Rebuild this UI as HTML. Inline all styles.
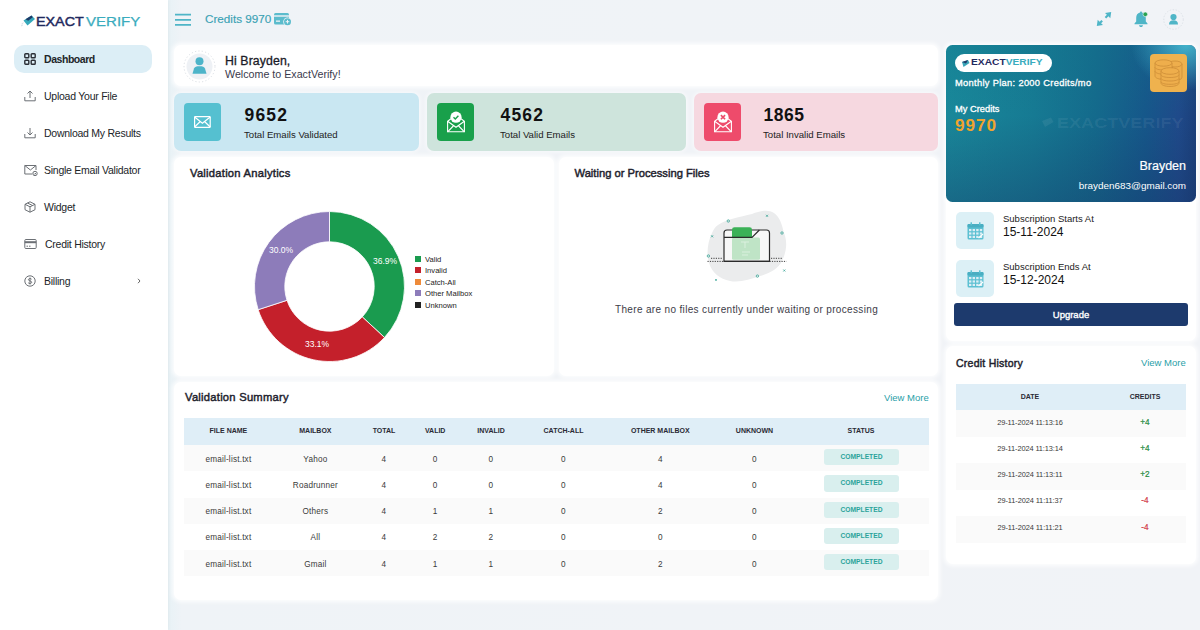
<!DOCTYPE html>
<html><head><meta charset="utf-8">
<style>
*{margin:0;padding:0;box-sizing:border-box}
html,body{width:1200px;height:630px;overflow:hidden}
body{background:linear-gradient(90deg,#fff 0,#fff 168px,#e8f2f6 168px,#eff3f7 182px,#f1f3f7 100%);font-family:"Liberation Sans",sans-serif;color:#1e1e2d;position:relative}
.abs{position:absolute}
.t{position:absolute;white-space:nowrap;line-height:1}
#side{left:0;top:0;width:168px;height:630px;background:#fff;box-shadow:1px 0 3px rgba(0,0,0,0.04)}
.nav{position:absolute;left:14px;width:137.5px;height:27.5px;border-radius:10px;font-size:10.5px;color:#212529}
.nav svg{position:absolute;left:10px;top:8px}
.nav .tx{position:absolute;left:30px;top:9px;white-space:nowrap;line-height:1;letter-spacing:-0.25px}
.nav.act{background:#dceef6}
.nav.act .tx{font-weight:bold;letter-spacing:-0.45px}
.card{position:absolute;background:#fff;border-radius:7px;box-shadow:0 0 4px 1.5px rgba(255,255,255,0.85)}
.stat{position:absolute;border-radius:7px;box-shadow:0 0 4px 1px rgba(255,255,255,0.6)}
.stat .ib{position:absolute;left:10px;top:10px;width:37px;height:37.5px;border-radius:4px}
.stat .ib svg{position:absolute;left:8px;top:8px}
.stat .num{position:absolute;top:106px;font-size:17.5px;font-weight:bold;color:#111;line-height:1;letter-spacing:0.6px}
.stat .lb{position:absolute;font-size:9.6px;color:#222;line-height:1;white-space:nowrap}
.ttl{position:absolute;font-size:11.2px;-webkit-text-stroke:0.45px #1e1e2d;letter-spacing:0.25px;color:#1e1e2d;white-space:nowrap;line-height:1}
.th{position:absolute;font-size:7px;font-weight:bold;color:#2a2a35;line-height:1;white-space:nowrap;transform:translateX(-50%)}
.td{position:absolute;font-size:8.2px;color:#3a3a3a;letter-spacing:0.2px;line-height:1;white-space:nowrap;transform:translateX(-50%)}
.badge{position:absolute;left:824px;width:75px;height:16.2px;background:#d9efee;border-radius:3px;color:#2aa39a;font-size:6.7px;font-weight:bold;text-align:center;line-height:16.2px}
.lg{position:absolute;left:415px;width:6.2px;height:6px;margin-top:0.6px}
.lgt{position:absolute;left:425px;font-size:7.6px;color:#222;line-height:1;white-space:nowrap;margin-top:0.8px}
</style></head>
<body>
<div id="side" class="abs">
  <!-- logo -->
  <svg class="abs" style="left:21px;top:14px" width="16" height="13" viewBox="0 0 16 13">
    <path d="M2.5 6.5 L10.5 1.5 L14 5 L6.5 11.5 Z" fill="#36a9bb"/>
    <path d="M4.5 5.2 L10.5 1.5 L11.8 3.3 L7.2 6.8 Z" fill="#1f3a68"/>
    <path d="M0.5 10 L2.5 8.8 M0 12 L2 10.8" stroke="#c5d3dc" stroke-width="0.7"/>
  </svg>
  <div class="t" style="left:36px;top:14.5px;font-size:13.2px;color:#1f2a5e;-webkit-text-stroke:0.45px #1f2a5e;transform:scaleX(1.085);transform-origin:0 0">EXACT</div>
  <div class="t" style="left:85.5px;top:14.5px;font-size:13.2px;color:#3aacbe;-webkit-text-stroke:0.25px #3aacbe;transform:scaleX(1.14);transform-origin:0 0">VERIFY</div>

  <div class="nav act" style="top:45px">
    <svg width="12" height="12" viewBox="0 0 12 12" fill="none" stroke="#2b2f36" stroke-width="1.4"><rect x="0.8" y="0.8" width="4" height="4" rx="0.8"/><rect x="7.2" y="0.8" width="4" height="4" rx="0.8"/><rect x="0.8" y="7.2" width="4" height="4" rx="0.8"/><rect x="7.2" y="7.2" width="4" height="4" rx="0.8"/></svg>
    <div class="tx">Dashboard</div></div>
  <div class="nav" style="top:82px">
    <svg width="12" height="12" viewBox="0 0 12 12" fill="none" stroke="#6c7075" stroke-width="1"><path d="M0.8 7 V10.8 H11.2 V7"/><path d="M6 8 V1.2 M3.5 3.5 L6 1 L8.5 3.5"/></svg>
    <div class="tx">Upload Your File</div></div>
  <div class="nav" style="top:119px">
    <svg width="12" height="12" viewBox="0 0 12 12" fill="none" stroke="#6c7075" stroke-width="1"><path d="M0.8 7 V10.8 H11.2 V7"/><path d="M6 1 V8 M3.5 5.5 L6 8 L8.5 5.5"/></svg>
    <div class="tx">Download My Results</div></div>
  <div class="nav" style="top:156px">
    <svg width="14" height="12" viewBox="0 0 14 12" fill="none" stroke="#6c7075" stroke-width="1"><path d="M8 10 H0.8 V1.5 H12 V6"/><path d="M0.8 1.5 L6.4 6 L12 1.5"/><circle cx="11" cy="9.5" r="2.2"/><path d="M10 9.5 L10.8 10.3 L12 9"/></svg>
    <div class="tx">Single Email Validator</div></div>
  <div class="nav" style="top:193px">
    <svg width="12" height="12" viewBox="0 0 12 12" fill="none" stroke="#6c7075" stroke-width="1"><path d="M6 0.8 L11 3.3 V8.7 L6 11.2 L1 8.7 V3.3 Z"/><path d="M1 3.3 L6 5.8 L11 3.3 M6 5.8 V11.2 M3.5 2 L8.5 4.5"/></svg>
    <div class="tx">Widget</div></div>
  <div class="nav" style="top:230px">
    <svg width="13" height="12" viewBox="0 0 13 12" fill="none" stroke="#6c7075" stroke-width="1"><rect x="0.8" y="1.5" width="11.4" height="9" rx="1"/><path d="M0.8 4.2 H12.2" stroke-width="2"/><path d="M2.5 8.2 H4 M5 8.2 H6.5"/></svg>
    <div class="tx" style="left:31px">Credit History</div></div>
  <div class="nav" style="top:267px">
    <svg width="12" height="12" viewBox="0 0 12 12" fill="none" stroke="#6c7075" stroke-width="1"><circle cx="6" cy="6" r="5.2"/><path d="M7.6 4.2 C7.2 3.4 4.4 3.2 4.4 4.7 C4.4 6.2 7.7 5.6 7.7 7.3 C7.7 8.8 4.8 8.7 4.2 7.8 M6 2.5 V9.5"/></svg>
    <div class="tx">Billing</div>
    <svg style="left:123px;top:11px" width="4" height="6" viewBox="0 0 4 6" fill="none" stroke="#555" stroke-width="0.9"><path d="M1 0.8 L3 3 L1 5.2"/></svg>
  </div>
</div>

<!-- topbar -->
<svg class="abs" style="left:175px;top:13px" width="16" height="13" viewBox="0 0 16 13" stroke="#4fb5c7" stroke-width="1.7"><path d="M0 1.7 H16 M0 6.8 H16 M0 11.9 H16"/></svg>
<div class="t" style="left:205px;top:12.6px;font-size:11.7px;color:#3aa2b4;-webkit-text-stroke:0.15px #3aa2b4">Credits 9970</div>
<svg class="abs" style="left:274px;top:13px" width="18" height="13" viewBox="0 0 18 13">
  <rect x="0" y="0" width="15" height="11.5" rx="1.5" fill="#5bbccd"/>
  <rect x="0" y="2.3" width="15" height="1.4" fill="#f1f3f7"/>
  <rect x="2" y="7.5" width="4" height="1.3" fill="#f1f3f7"/>
  <circle cx="13.5" cy="8.7" r="4.3" fill="#f1f3f7"/>
  <circle cx="13.5" cy="8.7" r="3.5" fill="#5bbccd"/>
  <path d="M13.5 6.9 V10.5 M11.7 8.7 H15.3" stroke="#f1f3f7" stroke-width="1"/>
</svg>
<!-- top right icons -->
<svg class="abs" style="left:1096px;top:11px" width="16" height="16" viewBox="0 0 16 16" fill="#4fb5c7">
  <path d="M15.2 1 L14.3 7.2 L12.4 5.3 L10.2 7.5 L8.7 6 L10.9 3.8 L9 1.9 Z"/>
  <path d="M0.8 15 L1.7 8.8 L3.6 10.7 L5.4 8.9 L6.9 10.4 L5.1 12.2 L7 14.1 Z"/>
</svg>
<svg class="abs" style="left:1133px;top:10px" width="17" height="18" viewBox="0 0 17 18">
  <path d="M8 1.5 C8.6 1.5 9 2 9 2.5 C11.5 3 12.8 5 12.8 8 V11.5 L14.5 13.5 V14.3 H1.5 V13.5 L3.2 11.5 V8 C3.2 5 4.5 3 7 2.5 C7 2 7.4 1.5 8 1.5 Z" fill="#4fb5c7"/>
  <path d="M6 15.2 H10 C10 16.4 9 17 8 17 C7 17 6 16.4 6 15.2 Z" fill="#4fb5c7"/>
  <circle cx="12.3" cy="4.3" r="2.3" fill="#27a350" stroke="#f1f3f7" stroke-width="0.6"/>
</svg>
<svg class="abs" style="left:1163px;top:9px" width="21" height="21" viewBox="0 0 21 21">
  <circle cx="10.5" cy="10.5" r="9.8" fill="none" stroke="#d5dbe2" stroke-width="0.7" stroke-dasharray="1.5 1.5"/>
  <circle cx="10.5" cy="8" r="3.1" fill="#4fb5c7"/>
  <path d="M6 15.5 C6 12.5 7.8 11.3 10.5 11.3 C13.2 11.3 15 12.5 15 15.5 Z" fill="#4fb5c7"/>
</svg>

<!-- welcome -->
<div class="card" style="left:174px;top:45px;width:764px;height:41px"></div>
<svg class="abs" style="left:183px;top:50px" width="33" height="33" viewBox="0 0 33 33">
  <circle cx="16.5" cy="16.5" r="15.5" fill="none" stroke="#c2c9d1" stroke-width="0.6" stroke-dasharray="1.2 2.2"/>
  <circle cx="16.5" cy="16.5" r="13" fill="#eef1f5"/>
  <circle cx="16.5" cy="11.3" r="4" fill="#4db4c9"/>
  <path d="M9.5 23.8 L11 18.5 C11.6 16.8 13.5 16.2 16.5 16.2 C19.5 16.2 21.4 16.8 22 18.5 L23.5 23.8 Z" fill="#4db4c9"/>
</svg>
<div class="t" style="left:225px;top:55px;font-size:12.3px;color:#1b1b28;-webkit-text-stroke:0.3px #1b1b28;letter-spacing:0.1px">Hi Brayden,</div>
<div class="t" style="left:225px;top:69px;font-size:10.7px;color:#3a3a4c">Welcome to ExactVerify!</div>

<!-- stats -->
<div class="stat" style="left:174px;top:93px;width:245px;height:58px;background:#c9e7f2">
  <div class="ib" style="background:#55c0d0">
    <svg width="21" height="22" viewBox="0 0 21 22" fill="none" stroke="#fff" stroke-width="1.2"><rect x="2.6" y="5.6" width="15.6" height="10.8" rx="0.6"/><path d="M2.6 6 L10.4 12.3 L18.2 6 M2.6 16 L8 10.8 M18.2 16 L12.8 10.8"/></svg>
  </div>
</div>
<div class="t" style="left:244.5px;top:107px;font-size:17.5px;font-weight:bold;color:#111;letter-spacing:1.2px">9652</div>
<div class="t" style="left:244px;top:130px;font-size:9.6px;color:#222">Total Emails Validated</div>

<div class="stat" style="left:427px;top:93px;width:259px;height:58px;background:#cee4dc">
  <div class="ib" style="background:#19a04b">
    <svg width="21" height="22" viewBox="0 0 21 22" fill="none" stroke="#fff" stroke-width="1.1"><path d="M2.6 10.2 V20.8 H19.4 V10.2 L11 4 Z"/><path d="M2.6 10.2 L11 16.3 L19.4 10.2 M2.6 20.8 L8.3 15 M19.4 20.8 L13.7 15"/><circle cx="11" cy="6.2" r="5.6" fill="#fff" stroke="none"/><path d="M8.5 6.3 L10.3 8 L13.4 4.8" stroke="#19a04b" stroke-width="1.4"/></svg>
  </div>
</div>
<div class="t" style="left:500.5px;top:107px;font-size:17.5px;font-weight:bold;color:#111;letter-spacing:1.2px">4562</div>
<div class="t" style="left:500px;top:130px;font-size:9.6px;color:#222">Total Valid Emails</div>

<div class="stat" style="left:694px;top:93px;width:244px;height:58px;background:#f6d8e0">
  <div class="ib" style="background:#ee4b6b">
    <svg width="21" height="22" viewBox="0 0 21 22" fill="none" stroke="#fff" stroke-width="1.1"><path d="M2.6 10.2 V20.8 H19.4 V10.2 L11 4 Z"/><path d="M2.6 10.2 L11 16.3 L19.4 10.2 M2.6 20.8 L8.3 15 M19.4 20.8 L13.7 15"/><circle cx="11" cy="6.2" r="5.6" fill="#fff" stroke="none"/><path d="M8.9 4.1 L13.1 8.3 M13.1 4.1 L8.9 8.3" stroke="#ec4d6b" stroke-width="1.6"/></svg>
  </div>
</div>
<div class="t" style="left:763.5px;top:107px;font-size:17.5px;font-weight:bold;color:#111;letter-spacing:0.5px">1865</div>
<div class="t" style="left:763px;top:130px;font-size:9.6px;color:#222">Total Invalid Emails</div>

<!-- analytics -->
<div class="card" style="left:174px;top:157px;width:380px;height:219px"></div>
<div class="ttl" style="left:190px;top:168px">Validation Analytics</div>
<svg class="abs" style="left:249px;top:206px" width="161" height="161" viewBox="-80.5 -80.5 161 161" id="donut"><path d="M0.00 -75.00 A75 75 0 0 1 54.99 51.00 L32.78 30.39 A44.7 44.7 0 0 0 0.00 -44.70 Z" fill="#1a9b4f" stroke="#fff" stroke-width="0.8"/><path d="M54.99 51.00 A75 75 0 0 1 -71.33 23.18 L-42.51 13.81 A44.7 44.7 0 0 0 32.78 30.39 Z" fill="#c4202b" stroke="#fff" stroke-width="0.8"/><path d="M-71.33 23.18 A75 75 0 0 1 -0.00 -75.00 L-0.00 -44.70 A44.7 44.7 0 0 0 -42.51 13.81 Z" fill="#8d7cba" stroke="#fff" stroke-width="0.8"/></svg>
<div class="t" style="left:373px;top:257px;font-size:8.5px;color:#fff">36.9%</div>
<div class="t" style="left:305px;top:340px;font-size:8.5px;color:#fff">33.1%</div>
<div class="t" style="left:269px;top:246px;font-size:8.5px;color:#fff">30.0%</div>
<div class="lg" style="top:255px;background:#1a9b4f"></div><div class="lgt" style="top:255px">Valid</div>
<div class="lg" style="top:266.5px;background:#c4202b"></div><div class="lgt" style="top:266.5px">Invalid</div>
<div class="lg" style="top:278px;background:#ee8b3a"></div><div class="lgt" style="top:278px">Catch-All</div>
<div class="lg" style="top:289.5px;background:#8d7cba"></div><div class="lgt" style="top:289.5px">Other Mailbox</div>
<div class="lg" style="top:301px;background:#222"></div><div class="lgt" style="top:301px">Unknown</div>

<!-- waiting -->
<div class="card" style="left:559px;top:157px;width:379px;height:219px"></div>
<div class="ttl" style="left:574.5px;top:168px;letter-spacing:0px">Waiting or Processing Files</div>
<svg class="abs" style="left:700px;top:205px" width="90" height="85" viewBox="0 0 90 85">
  <path d="M18 20 C26 14 40 12 52 9 C60 6 68 4 74 8 C80 12 82 20 84 28 C88 38 86 48 82 56 C78 64 70 68 60 71 C50 74 40 78 30 76 C20 74 12 68 9 58 C6 48 8 36 12 28 C14 24 15 22 18 20 Z" fill="#ebeced"/>
  <path d="M24 56.4 V28 Q24 25 27 25 H66.5 Q69.5 25 69.5 28 V56.4 Z" fill="#f7f7f7" stroke="#2b2b2b" stroke-width="1.2"/>
  <path d="M32 24.5 Q32 22.3 34.5 22.3 H49.5 Q52 22.3 52 24.5 V32.4 H32 Z" fill="#3bb157"/>
  <rect x="32" y="32.4" width="28" height="22.3" rx="1.5" fill="#bfe4c6"/>
  <path d="M24 32.4 H52 L59.4 25" fill="none" stroke="#2b2b2b" stroke-width="1.2"/>
  <path d="M41 37 H49 M45 37 V43 M42 47 H50 M42 50 H48" stroke="#e2f3e5" stroke-width="0.8"/>
  <path d="M7.5 56.4 H24 M69.5 56.4 H86.5 M11 53.3 H22 M71 53.3 H82" stroke="#2b2b2b" stroke-width="0.9" stroke-dasharray="1.2 1.2"/>
  <path d="M24 56.4 H69.5" stroke="#2b2b2b" stroke-width="1.2"/>
  <g fill="none" stroke="#3aa596" stroke-width="0.8">
    <circle cx="28.3" cy="16" r="1.2"/><circle cx="82" cy="28" r="1.2"/><circle cx="8.4" cy="51" r="1.2"/><circle cx="57.4" cy="71.1" r="1.2"/>
    <path d="M66 9.8 L68 11.8 M68 9.8 L66 11.8 M11.1 30.3 L13.1 32.3 M13.1 30.3 L11.1 32.3 M83.3 64.5 L85.3 66.5 M85.3 64.5 L83.3 66.5"/>
  </g>
  <circle cx="16" cy="74.9" r="0.9" fill="#3aa596"/>
</svg>
<div class="t" style="left:615px;top:305px;font-size:10px;color:#3c3c48;letter-spacing:0.34px">There are no files currently under waiting or processing</div>

<!-- summary -->
<div class="card" style="left:174px;top:382px;width:764px;height:218px"></div>
<div class="ttl" style="left:185px;top:392px">Validation Summary</div>
<div class="t" style="left:884px;top:393px;font-size:9.5px;color:#2aa0a8">View More</div>
<div class="abs" style="left:184px;top:418px;width:745px;height:27px;background:#dfeef7"></div>
<div class="abs" style="left:184px;top:444.9px;width:745px;height:26.3px;background:#fafafa"></div>
<div class="abs" style="left:184px;top:497.5px;width:745px;height:26.3px;background:#fafafa"></div>
<div class="abs" style="left:184px;top:550.1px;width:745px;height:26.3px;background:#fafafa"></div>
<div class="th" style="left:228.4px;top:427px">FILE NAME</div>
<div class="th" style="left:315.4px;top:427px">MAILBOX</div>
<div class="th" style="left:384px;top:427px">TOTAL</div>
<div class="th" style="left:435.2px;top:427px">VALID</div>
<div class="th" style="left:491px;top:427px">INVALID</div>
<div class="th" style="left:563.5px;top:427px">CATCH-ALL</div>
<div class="th" style="left:660.3px;top:427px">OTHER MAILBOX</div>
<div class="th" style="left:754.5px;top:427px">UNKNOWN</div>
<div class="th" style="left:861px;top:427px">STATUS</div>
<div class="td" style="left:228.4px;top:455.5px">email-list.txt</div><div class="td" style="left:315.4px;top:455.5px">Yahoo</div><div class="td" style="left:384px;top:455.5px">4</div><div class="td" style="left:435.2px;top:455.5px">0</div><div class="td" style="left:491px;top:455.5px">0</div><div class="td" style="left:563.5px;top:455.5px">0</div><div class="td" style="left:660.3px;top:455.5px">4</div><div class="td" style="left:754.5px;top:455.5px">0</div><div class="badge" style="top:449.1px">COMPLETED</div>
<div class="td" style="left:228.4px;top:481.8px">email-list.txt</div><div class="td" style="left:315.4px;top:481.8px">Roadrunner</div><div class="td" style="left:384px;top:481.8px">4</div><div class="td" style="left:435.2px;top:481.8px">0</div><div class="td" style="left:491px;top:481.8px">0</div><div class="td" style="left:563.5px;top:481.8px">0</div><div class="td" style="left:660.3px;top:481.8px">4</div><div class="td" style="left:754.5px;top:481.8px">0</div><div class="badge" style="top:475.4px">COMPLETED</div>
<div class="td" style="left:228.4px;top:508.1px">email-list.txt</div><div class="td" style="left:315.4px;top:508.1px">Others</div><div class="td" style="left:384px;top:508.1px">4</div><div class="td" style="left:435.2px;top:508.1px">1</div><div class="td" style="left:491px;top:508.1px">1</div><div class="td" style="left:563.5px;top:508.1px">0</div><div class="td" style="left:660.3px;top:508.1px">2</div><div class="td" style="left:754.5px;top:508.1px">0</div><div class="badge" style="top:501.7px">COMPLETED</div>
<div class="td" style="left:228.4px;top:534.4px">email-list.txt</div><div class="td" style="left:315.4px;top:534.4px">All</div><div class="td" style="left:384px;top:534.4px">4</div><div class="td" style="left:435.2px;top:534.4px">2</div><div class="td" style="left:491px;top:534.4px">2</div><div class="td" style="left:563.5px;top:534.4px">0</div><div class="td" style="left:660.3px;top:534.4px">0</div><div class="td" style="left:754.5px;top:534.4px">0</div><div class="badge" style="top:528.0px">COMPLETED</div>
<div class="td" style="left:228.4px;top:560.8px">email-list.txt</div><div class="td" style="left:315.4px;top:560.8px">Gmail</div><div class="td" style="left:384px;top:560.8px">4</div><div class="td" style="left:435.2px;top:560.8px">1</div><div class="td" style="left:491px;top:560.8px">1</div><div class="td" style="left:563.5px;top:560.8px">0</div><div class="td" style="left:660.3px;top:560.8px">2</div><div class="td" style="left:754.5px;top:560.8px">0</div><div class="badge" style="top:554.3px">COMPLETED</div>

<!-- credit card -->
<div class="card" style="z-index:2;left:946px;top:45px;width:250px;height:157px;overflow:hidden;border-radius:6.5px;background:linear-gradient(90deg,#19889a 0%,#167a93 35%,#146a8c 60%,#16578a 80%,#1f4a8a 93%,#1b3f7a 100%)">
  <div class="abs" style="left:0;top:0;width:250px;height:157px;background:linear-gradient(180deg,rgba(20,120,140,0.25) 0%,rgba(20,60,110,0) 45%,rgba(22,50,100,0.35) 100%)"></div>
  <div class="abs" style="left:185px;top:-45px;width:110px;height:90px;border-radius:50%;background:radial-gradient(closest-side,rgba(80,210,225,0.75),rgba(80,210,225,0) 100%)"></div>
  <div class="abs" style="left:9px;top:9px;width:97px;height:18px;border-radius:9px;background:#fff"></div>
  <div class="t" style="left:25px;top:13.2px;font-size:9.3px;font-weight:bold;color:#1f2a5e;transform:scaleX(1.1);transform-origin:0 0">EXACT<span style="color:#3aacbe">VERIFY</span></div>
  <svg class="abs" style="left:14px;top:13.5px" width="10" height="9" viewBox="0 0 10 9"><path d="M2 3 L8 1 L9.5 4 L3.5 8 Z" fill="#3aa6b9"/><path d="M2 3 L8 1 L6 4.5 Z" fill="#1f3a68"/></svg>
  <div class="t" style="left:9px;top:33.5px;font-size:9.3px;color:#fff;-webkit-text-stroke:0.3px #fff;letter-spacing:0.32px">Monthly Plan: 2000 Credits/mo</div>
  <div class="t" style="left:9px;top:60px;font-size:9.3px;color:#fff;-webkit-text-stroke:0.3px #fff">My Credits</div>
  <div class="t" style="left:9px;top:71.5px;font-size:17.2px;font-weight:bold;color:#f0a42e;letter-spacing:0.9px">9970</div>
  <div class="t" style="left:111px;top:70px;font-size:15.5px;font-weight:bold;color:rgba(255,255,255,0.07);transform:scaleX(1.166);transform-origin:0 0">EXACTVERIFY</div><svg class="abs" style="left:95px;top:71px" width="13" height="12" viewBox="0 0 13 12"><path d="M1 5 L10 1.5 L12.5 6 L4 11 Z" fill="rgba(255,255,255,0.07)"/></svg>
  <div class="t" style="right:10px;top:115px;font-size:12.5px;color:#fff;-webkit-text-stroke:0.2px #fff">Brayden</div>
  <div class="t" style="right:10px;top:136px;font-size:9.9px;color:#fff">brayden683@gmail.com</div>
  <div class="abs" style="left:203.5px;top:9.2px;width:37px;height:37.5px;border-radius:4px;background:#efb24e"></div>
  <svg class="abs" style="left:203.5px;top:9.2px" width="37" height="37" viewBox="0 0 37 37" fill="#eeae4c" stroke="#c88a35" stroke-width="0.7">
    <path d="M22 10 V24 C22 26 25 27 28 26 C31 25.5 32 24.5 32 23 V10"/>
    <ellipse cx="25" cy="10" rx="7" ry="3"/>
    <path d="M5 9 V22 C5 24 9 25.5 14 25.5 C19 25.5 22 24 22 22 V9"/>
    <path d="M5 13 C5 15 9 16 14 16 M5 17 C5 19 9 20 12 20"/>
    <ellipse cx="13.5" cy="9" rx="8.5" ry="3.2"/>
    <path d="M11 17 V29 C11 31 15 32.5 20 32.5 C25 32.5 29 31 29 29 V17"/>
    <path d="M11 20.5 C11 22.5 15 23.5 20 23.5 C25 23.5 29 22.5 29 20.5 M11 24 C11 26 15 27 20 27 C25 27 29 26 29 24 M11 27.5 C11 29.5 15 30.3 20 30.3 C25 30.3 29 29.5 29 27.5"/>
    <ellipse cx="20" cy="17" rx="9" ry="3.3"/>
  </svg>
</div>

<!-- subscription -->
<div class="card" style="left:946px;top:190px;width:250px;height:150.5px"></div>
<div class="abs" style="left:956px;top:212px;width:38px;height:37px;border-radius:5px;background:#dcf0f6"></div>
<div class="abs" style="left:956px;top:260px;width:38px;height:37px;border-radius:5px;background:#dcf0f6"></div>
<svg class="abs" style="left:967px;top:222px" width="17" height="18" viewBox="0 0 17 18" id="cal1"><rect x="0.5" y="2" width="16" height="15.5" rx="1.5" fill="#5cc0d2"/><rect x="0.5" y="2" width="16" height="3.5" rx="1" fill="#49aec2"/><rect x="3.5" y="0.3" width="1.5" height="3" fill="#5cc0d2"/><rect x="12" y="0.3" width="1.5" height="3" fill="#5cc0d2"/><rect x="2.0" y="7.0" width="2.4" height="2.2" fill="#ddeef5"/><rect x="5.6" y="7.0" width="2.4" height="2.2" fill="#ddeef5"/><rect x="9.2" y="7.0" width="2.4" height="2.2" fill="#ddeef5"/><rect x="12.8" y="7.0" width="2.4" height="2.2" fill="#ddeef5"/><rect x="2.0" y="10.4" width="2.4" height="2.2" fill="#ddeef5"/><rect x="5.6" y="10.4" width="2.4" height="2.2" fill="#ddeef5"/><rect x="9.2" y="10.4" width="2.4" height="2.2" fill="#ddeef5"/><rect x="12.8" y="10.4" width="2.4" height="2.2" fill="#ddeef5"/><rect x="2.0" y="13.8" width="2.4" height="2.2" fill="#ddeef5"/><rect x="5.6" y="13.8" width="2.4" height="2.2" fill="#ddeef5"/><rect x="9.2" y="13.8" width="2.4" height="2.2" fill="#ddeef5"/><rect x="12.8" y="13.8" width="2.4" height="2.2" fill="#ddeef5"/><path d="M11.5 16 L16 12" stroke="#fff" stroke-width="1.3"/></svg>
<svg class="abs" style="left:967px;top:270px" width="17" height="18" viewBox="0 0 17 18" id="cal2"><rect x="0.5" y="2" width="16" height="15.5" rx="1.5" fill="#5cc0d2"/><rect x="0.5" y="2" width="16" height="3.5" rx="1" fill="#49aec2"/><rect x="3.5" y="0.3" width="1.5" height="3" fill="#5cc0d2"/><rect x="12" y="0.3" width="1.5" height="3" fill="#5cc0d2"/><rect x="2.0" y="7.0" width="2.4" height="2.2" fill="#ddeef5"/><rect x="5.6" y="7.0" width="2.4" height="2.2" fill="#ddeef5"/><rect x="9.2" y="7.0" width="2.4" height="2.2" fill="#ddeef5"/><rect x="12.8" y="7.0" width="2.4" height="2.2" fill="#ddeef5"/><rect x="2.0" y="10.4" width="2.4" height="2.2" fill="#ddeef5"/><rect x="5.6" y="10.4" width="2.4" height="2.2" fill="#ddeef5"/><rect x="9.2" y="10.4" width="2.4" height="2.2" fill="#ddeef5"/><rect x="12.8" y="10.4" width="2.4" height="2.2" fill="#ddeef5"/><rect x="2.0" y="13.8" width="2.4" height="2.2" fill="#ddeef5"/><rect x="5.6" y="13.8" width="2.4" height="2.2" fill="#ddeef5"/><rect x="9.2" y="13.8" width="2.4" height="2.2" fill="#ddeef5"/><rect x="12.8" y="13.8" width="2.4" height="2.2" fill="#ddeef5"/><path d="M11.5 16 L16 12" stroke="#fff" stroke-width="1.3"/></svg>
<div class="t" style="left:1003px;top:214px;font-size:9.5px;color:#222">Subscription Starts At</div>
<div class="t" style="left:1003px;top:226px;font-size:12px;color:#111;letter-spacing:0px">15-11-2024</div>
<div class="t" style="left:1003px;top:262px;font-size:9.5px;color:#222">Subscription Ends At</div>
<div class="t" style="left:1003px;top:274px;font-size:12px;color:#111;letter-spacing:0px">15-12-2024</div>
<div class="abs" style="left:954px;top:303px;width:234px;height:23px;border-radius:3px;background:#1d3a6d"></div>
<div class="t" style="left:954px;width:234px;text-align:center;top:309.5px;font-size:9.5px;color:#fff;-webkit-text-stroke:0.35px #fff">Upgrade</div>

<!-- credit history -->
<div class="card" style="left:946px;top:346px;width:250px;height:218px"></div>
<div class="ttl" style="left:956px;top:358.3px;font-size:10.5px">Credit History</div>
<div class="t" style="left:1141px;top:358px;font-size:9.5px;color:#2aa0a8">View More</div>
<div class="abs" style="left:956px;top:384px;width:230px;height:26px;background:#dfeef7"></div>
<div class="abs" style="left:956px;top:410px;width:230px;height:26.5px;background:#fafafa"></div>
<div class="abs" style="left:956px;top:463px;width:230px;height:26.5px;background:#fafafa"></div>
<div class="abs" style="left:956px;top:516px;width:230px;height:26.5px;background:#fafafa"></div>
<div class="th" style="left:1030px;top:393px">DATE</div>
<div class="th" style="left:1145px;top:393px">CREDITS</div>
<div class="td" style="left:1030px;top:418.9px;font-size:7.4px;letter-spacing:-0.1px">29-11-2024 11:13:16</div><div class="td" style="left:1145px;top:418.9px;color:#1e8a3e;-webkit-text-stroke:0.2px currentColor">+4</div>
<div class="td" style="left:1030px;top:445.1px;font-size:7.4px;letter-spacing:-0.1px">29-11-2024 11:13:14</div><div class="td" style="left:1145px;top:445.1px;color:#1e8a3e;-webkit-text-stroke:0.2px currentColor">+4</div>
<div class="td" style="left:1030px;top:470.9px;font-size:7.4px;letter-spacing:-0.1px">29-11-2024 11:13:11</div><div class="td" style="left:1145px;top:470.9px;color:#1e8a3e;-webkit-text-stroke:0.2px currentColor">+2</div>
<div class="td" style="left:1030px;top:497.1px;font-size:7.4px;letter-spacing:-0.1px">29-11-2024 11:11:37</div><div class="td" style="left:1145px;top:497.1px;color:#d23a48;-webkit-text-stroke:0.2px currentColor">-4</div>
<div class="td" style="left:1030px;top:523.8px;font-size:7.4px;letter-spacing:-0.1px">29-11-2024 11:11:21</div><div class="td" style="left:1145px;top:523.8px;color:#d23a48;-webkit-text-stroke:0.2px currentColor">-4</div>

</body></html>
